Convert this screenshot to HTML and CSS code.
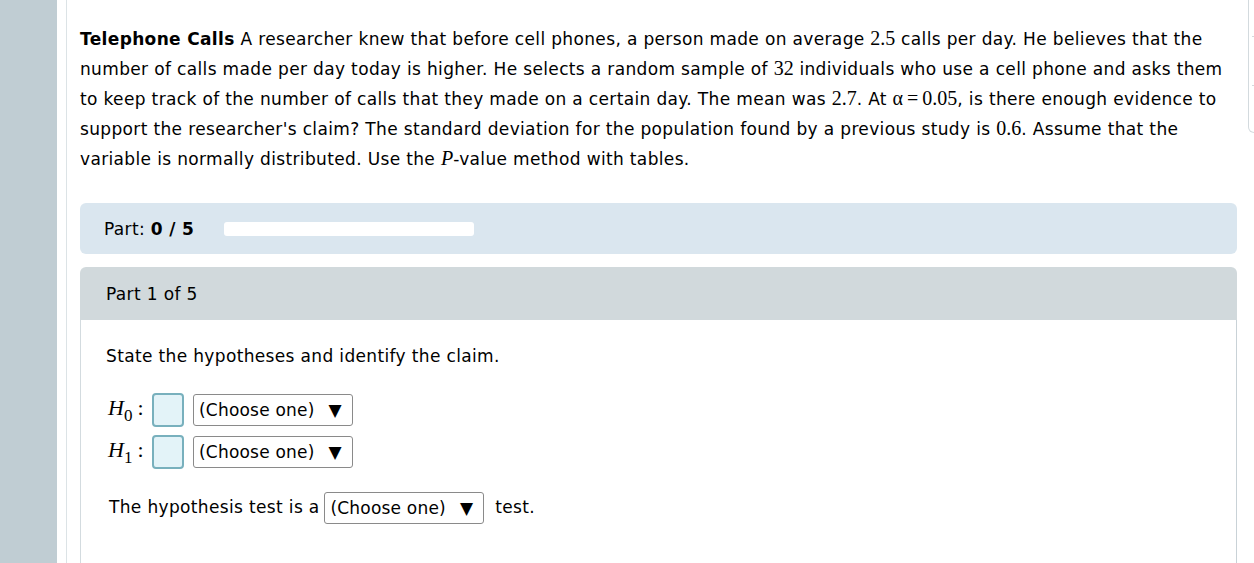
FILE: index.html
```html
<!DOCTYPE html>
<html lang="en">

<head>
    <meta charset="UTF-8">
    <meta name="viewport" content="width=device-width, initial-scale=1.0">
    <link rel="stylesheet" href="styles.css">
    <title>Telephone Calls</title>
</head>

<body>
    <div class="page">
        <div class="sidebar"></div>

        <div class="main">
            <div class="content">
                <p class="problem">
                    <b>Telephone Calls</b> A researcher knew that before cell phones, a person made on average
                    <span class="m">2.5</span> calls per day. He believes that the number of calls made per day
                    today is higher. He selects a random sample of <span class="m">32</span> individuals who use a
                    cell phone and asks them to keep track of the number of calls that they made on a certain day.
                    The mean was <span class="m">2.7</span>. At <span class="m">α&thinsp;=&thinsp;0.05</span>, is
                    there enough evidence to support the researcher's claim? The standard deviation for the
                    population found by a previous study is <span class="m">0.6</span>. Assume that the variable
                    is normally distributed. Use the <span class="m"><i>P</i></span>-value method with tables.
                </p>

                <div class="progress">
                    <span>Part: <b>0 / 5</b></span>
                    <div class="track"></div>
                </div>

                <div class="part">
                    <div class="part-head">Part 1 of 5</div>
                    <div class="part-body">
                        <div class="prompt">State the hypotheses and identify the claim.</div>

                        <div class="hyp">
                            <div class="hyp-row">
                                <span class="hyp-label"><i>H</i><sub>0</sub><span class="colon">:</span></span>
                                <span class="blank"></span>
                                <span class="choose">(Choose one) <span class="arrow">▼</span></span>
                            </div>
                            <div class="hyp-row">
                                <span class="hyp-label"><i>H</i><sub>1</sub><span class="colon">:</span></span>
                                <span class="blank"></span>
                                <span class="choose">(Choose one) <span class="arrow">▼</span></span>
                            </div>
                        </div>

                        <div class="test-row">
                            The hypothesis test is a
                            <span class="choose">(Choose one) <span class="arrow">▼</span></span>
                            test.
                        </div>
                    </div>
                </div>
            </div>

            <div class="side">
                <div class="side-row"></div>
                <div class="side-row"></div>
            </div>
        </div>
    </div>
</body>

</html>
```

FILE: styles.css
```css
*,
*::before,
*::after {
    box-sizing: border-box;
}

body {
    margin: 0;
    overflow: hidden;
    font-family: "DejaVu Sans", Verdana, sans-serif;
    font-size: 17px;
    letter-spacing: 0.35px;
    color: #000;
    background: #fff;
}

.page {
    display: flex;
    height: 563px;
}

.sidebar {
    flex: 0 0 57px;
    background: #c0cdd3;
}

.main {
    flex: 1;
    display: flex;
    margin-left: 9px;
    border-left: 1px solid #dce3e6;
    min-width: 0;
}

.content {
    flex: 0 0 1157px;
    margin-left: 13px;
    padding-top: 24px;
}

.problem {
    margin: 0;
    line-height: 30px;
}

.m {
    font-family: "Liberation Serif", "Times New Roman", serif;
    font-size: 20px;
    line-height: 0;
    letter-spacing: 0;
}

.progress {
    display: flex;
    align-items: center;
    gap: 30px;
    height: 51px;
    margin-top: 29px;
    padding-left: 24px;
    background: #dae6ef;
    border-radius: 6px;
}

.track {
    width: 250px;
    height: 14px;
    background: #fff;
    border-radius: 3px;
}

.part {
    margin-top: 13px;
}

.part-head {
    height: 53px;
    display: flex;
    align-items: center;
    padding-left: 26px;
    background: #d1d9dc;
    border-radius: 6px 6px 0 0;
}

.part-body {
    border-left: 1px solid #d3dbdf;
    border-right: 1px solid #c9d2d7;
    padding: 24px 0 40px 25px;
    height: 260px;
}

.prompt {
    line-height: 24px;
}

.hyp {
    margin-top: 25px;
    margin-left: 2px;
    display: flex;
    flex-direction: column;
    gap: 8px;
}

.hyp-row {
    display: flex;
    align-items: center;
    gap: 9px;
}

.hyp-label {
    font-family: "Liberation Serif", "Times New Roman", serif;
    font-size: 22px;
    letter-spacing: 0;
    width: 35px;
    white-space: nowrap;
}

.hyp-label sub {
    font-size: 17px;
    font-style: normal;
    vertical-align: -6px;
}

.colon {
    margin-left: 5px;
}

.blank {
    width: 32px;
    height: 34px;
    background: #e3f3f8;
    border: 2px solid #78b0bd;
    border-radius: 4px;
}

.choose {
    display: inline-flex;
    align-items: center;
    gap: 14px;
    width: 160px;
    height: 32px;
    padding: 0 0 0 5px;
    border: 1px solid #8a8a8a;
    border-radius: 3px;
    background: #fff;
    vertical-align: middle;
    letter-spacing: 0.2px;
}

.arrow {
    font-size: 17px;
}

.test-row {
    margin-top: 23px;
    margin-left: 3px;
}

.test-row .choose {
    margin: 0 5px 0 -1px;
}

.side {
    flex: 0 0 200px;
    margin-left: 11px;
    height: 133px;
    border: 1px solid #d3dade;
    border-top: 0;
    border-radius: 0 0 0 6px;
    padding: 36px 0 0 3px;
}

.side-row {
    height: 49px;
    border-top: 1px solid #d3dade;
}
```
